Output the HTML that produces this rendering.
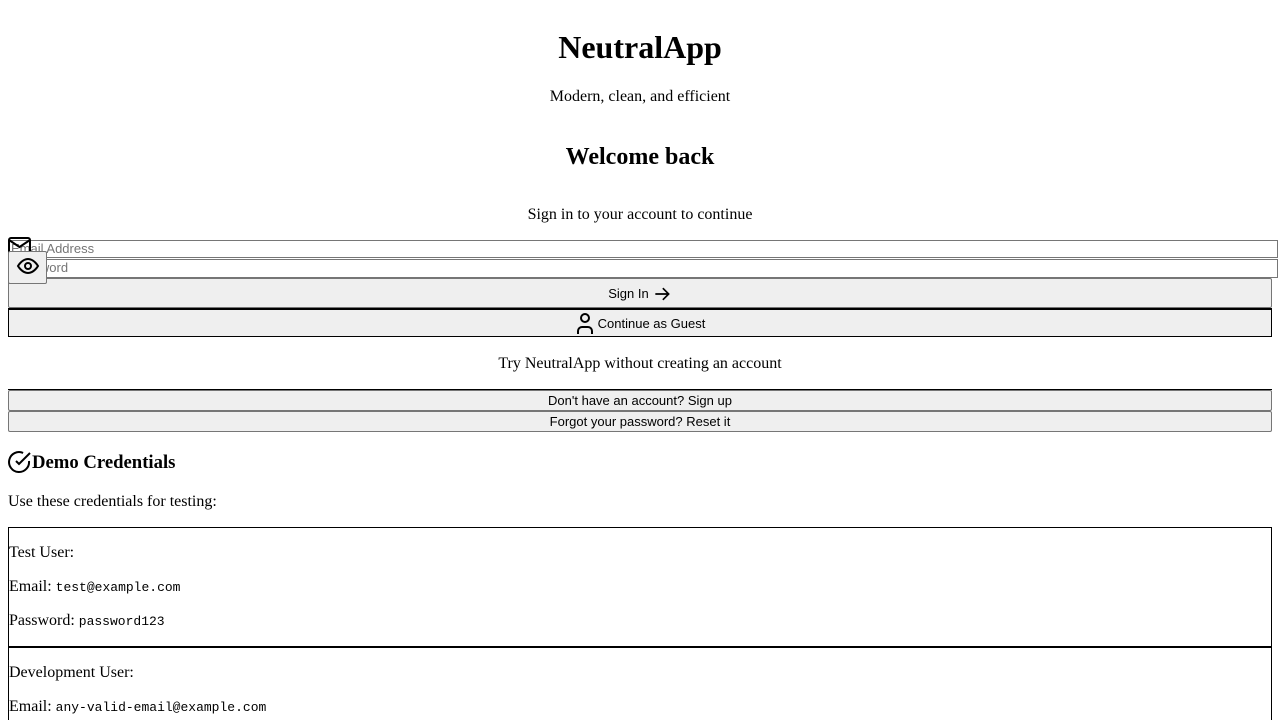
<!DOCTYPE html>
<html style="overflow:hidden;height:720px"><head><meta charset="utf-8"><style>
*{box-sizing:border-box}
body{margin:0;width:1280px;height:720px;overflow:hidden;font-family:"Liberation Serif",serif;color:#000;background:#fff;position:relative}
.a{position:absolute}
.c{left:0;width:1280px;text-align:center}
.inp{position:absolute;left:8px;width:1270px;border:1px solid #767676;background:#fff;font:13px "Liberation Sans",sans-serif;color:#757575;padding:0 2px;line-height:15px}
.btn{position:absolute;left:8px;width:1264px;background:#efefef;border:1px solid #767676;border-radius:2px;font:13px "Liberation Sans",sans-serif;display:flex;align-items:center;justify-content:center;gap:3px}
.mono{font-family:"Liberation Mono",monospace;font-size:13px}
.box{position:absolute;left:8px;width:1264px;border:1px solid #000;font-size:16px}
.box p{margin:0;position:absolute;left:0}
</style></head><body>
<div class="a c" style="top:27px;font-size:32px;font-weight:bold;line-height:40px">NeutralApp</div>
<div class="a c" style="top:88px;font-size:16px">Modern, clean, and efficient</div>
<div class="a c" style="top:143px;font-size:24px;font-weight:bold;line-height:28px">Welcome back</div>
<div class="a c" style="top:206px;font-size:16px">Sign in to your account to continue</div>
<div class="inp" style="top:240px;height:18px">Email Address</div>
<div class="inp" style="top:259px;height:19px">Password</div>
<div class="btn" style="top:278px;height:30px;padding-top:1px">Sign In <svg width="20" height="20" viewBox="0 0 24 24" fill="none" stroke="#000" stroke-width="2"><path d="M4 12h16M13 5l7 7-7 7"/></svg></div>
<svg class="a" style="left:8px;top:237px" width="24" height="18" viewBox="0 0 24 18" fill="none" stroke="#000" stroke-width="2"><rect x="1" y="1" width="21" height="16" rx="2"/><path d="M1 3l10.5 7L22 3"/></svg>
<div class="a" style="left:8px;top:251px;width:39px;height:33px;background:#efefef;border:1px solid #767676;border-radius:2px"></div>
<svg class="a" style="left:16px;top:256px" width="24" height="20" viewBox="0 0 24 20" fill="none" stroke="#000" stroke-width="2"><path d="M2 10s4-7 10-7 10 7 10 7-4 7-10 7S2 10 2 10z"/><circle cx="12" cy="10" r="3"/></svg>
<div class="btn" style="top:308px;height:29px;border:1px solid #000;border-top:2px solid #000;border-radius:0">
<svg width="20" height="22" viewBox="0 0 20 22" fill="none" stroke="#000" stroke-width="2"><circle cx="10" cy="6" r="4"/><path d="M3 22v-3a4 4 0 0 1 4-4h6a4 4 0 0 1 4 4v3"/></svg>Continue as Guest</div>
<div class="a c" style="top:355px;font-size:16px">Try NeutralApp without creating an account</div>
<div class="a" style="left:8px;top:389px;width:1264px;height:1px;background:#000"></div>
<div class="btn" style="top:390px;height:21px">Don't have an account? Sign up</div>
<div class="btn" style="top:411px;height:21px">Forgot your password? Reset it</div>
<svg class="a" style="left:8px;top:450px" width="24" height="24" viewBox="0 0 24 24" fill="none" stroke="#000" stroke-width="2"><path d="M21 11a10 10 0 1 1-5.9-8.1"/><path d="M8 11l3 3L22 3"/></svg>
<div class="a" style="left:32px;top:452px;font-size:18.7px;font-weight:bold">Demo Credentials</div>
<div class="a" style="left:8px;top:493px;font-size:16px">Use these credentials for testing:</div>
<div class="box" style="top:527px;height:121px">
<p style="top:16px">Test User:</p>
<p style="top:50px">Email: <span class="mono">test@example.com</span></p>
<p style="top:84px">Password: <span class="mono">password123</span></p>
</div>
<div class="box" style="top:646px;height:74px;border-top:2px solid #000;border-bottom:none">
<p style="top:16px">Development User:</p>
<p style="top:50px">Email: <span class="mono">any-valid-email@example.com</span></p>
</div>
</body></html>
